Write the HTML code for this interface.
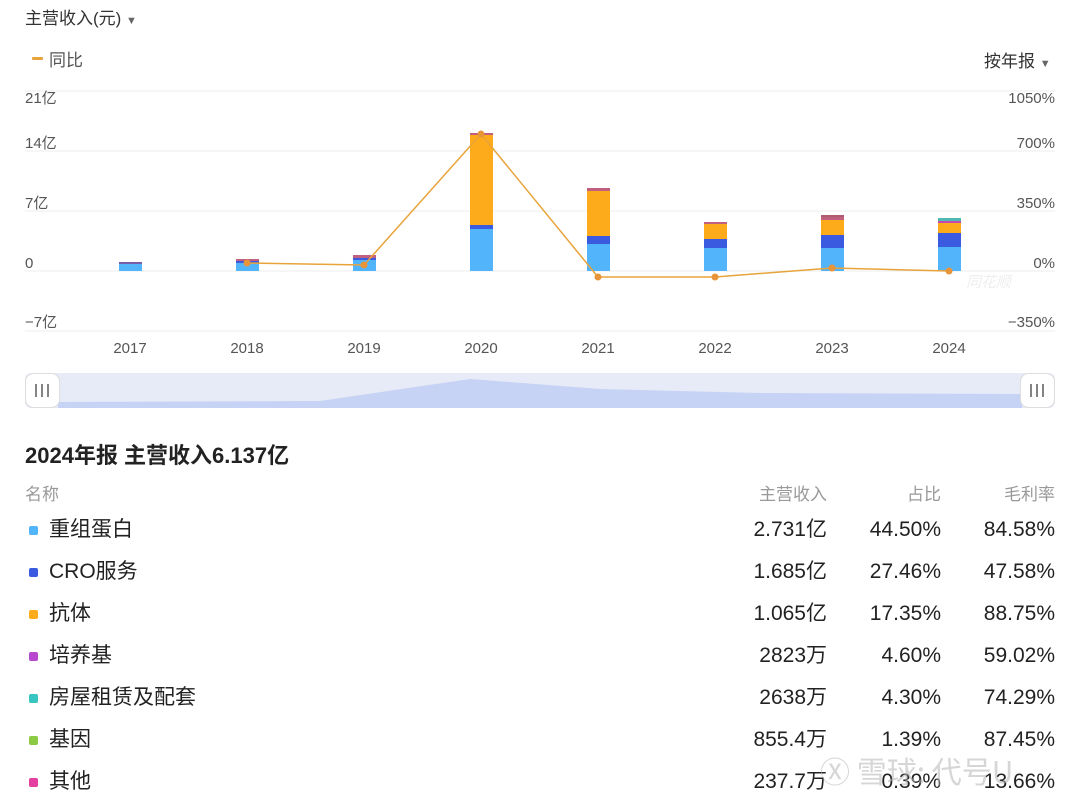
<!DOCTYPE html>
<html><head><meta charset="utf-8">
<style>
html,body{margin:0;padding:0;background:#fff;}
body{width:1080px;height:803px;position:relative;overflow:hidden;font-family:"Liberation Sans","Noto Sans CJK SC",sans-serif;color:#222;}
.a{position:absolute;white-space:nowrap;}
.hdr{font-size:17px;color:#999;top:484px;line-height:22px;}
.row{font-size:21px;color:#222;line-height:24px;height:24px;}
.r{text-align:right;}
.dot{position:absolute;left:29px;width:9px;height:9px;border-radius:2px;}
</style></head><body>
<div class="a" style="left:25px;top:4px;font-size:17px;color:#333;">主营收入(元) <span style="font-size:11px;color:#666;">▼</span></div>
<div class="a" style="left:32px;top:57px;width:11px;height:3px;background:#e8a33a;border-radius:1px;"></div>
<div class="a" style="left:49px;top:46px;font-size:17px;color:#555;">同比</div>
<div class="a" style="left:984px;top:47px;font-size:17px;color:#333;">按年报 <span style="font-size:11px;color:#666;">▼</span></div>

<svg class="a" style="left:0;top:0" width="1080" height="420" xmlns="http://www.w3.org/2000/svg">
<g stroke="#ececec" stroke-width="1">
<line x1="25" y1="91" x2="1055" y2="91"/><line x1="25" y1="151" x2="1055" y2="151"/>
<line x1="25" y1="211" x2="1055" y2="211"/><line x1="25" y1="271" x2="1055" y2="271"/>
<line x1="25" y1="331" x2="1055" y2="331"/>
</g>
<g font-family="Liberation Sans,Noto Sans CJK SC,sans-serif" font-size="15" fill="#555">
<text x="25" y="103">21亿</text><text x="25" y="148">14亿</text><text x="25" y="208">7亿</text><text x="25" y="268">0</text><text x="25" y="327">−7亿</text>
<g text-anchor="end"><text x="1055" y="103">1050%</text><text x="1055" y="148">700%</text><text x="1055" y="208">350%</text><text x="1055" y="268">0%</text><text x="1055" y="327">−350%</text></g>
<g text-anchor="middle" fill="#555"><text x="130" y="353">2017</text><text x="247" y="353">2018</text><text x="364" y="353">2019</text><text x="481" y="353">2020</text><text x="598" y="353">2021</text><text x="715" y="353">2022</text><text x="832" y="353">2023</text><text x="949" y="353">2024</text></g>
</g>
<g>
<rect x="119" y="264" width="23" height="7" fill="#52b4fb"/><rect x="119" y="262" width="23" height="2" fill="#7a5da8"/>
<rect x="236" y="263" width="23" height="8" fill="#52b4fb"/><rect x="236" y="261" width="23" height="2" fill="#3a5be0"/><rect x="236" y="259" width="23" height="2" fill="#c06080"/>
<rect x="353" y="260" width="23" height="11" fill="#52b4fb"/><rect x="353" y="258" width="23" height="2" fill="#3a5be0"/><rect x="353" y="255" width="23" height="3" fill="#c06080"/>
<rect x="470" y="229" width="23" height="42" fill="#52b4fb"/><rect x="470" y="225" width="23" height="4" fill="#3a5be0"/><rect x="470" y="135" width="23" height="90" fill="#fdab1a"/><rect x="470" y="133" width="23" height="2" fill="#c06080"/>
<rect x="587" y="244" width="23" height="27" fill="#52b4fb"/><rect x="587" y="236" width="23" height="8" fill="#3a5be0"/><rect x="587" y="191" width="23" height="45" fill="#fdab1a"/><rect x="587" y="188" width="23" height="3" fill="#c06080"/>
<rect x="704" y="248" width="23" height="23" fill="#52b4fb"/><rect x="704" y="239" width="23" height="9" fill="#3a5be0"/><rect x="704" y="224" width="23" height="15" fill="#fdab1a"/><rect x="704" y="222" width="23" height="2" fill="#c06080"/>
<rect x="821" y="248" width="23" height="23" fill="#52b4fb"/><rect x="821" y="235" width="23" height="13" fill="#3a5be0"/><rect x="821" y="220" width="23" height="15" fill="#fdab1a"/><rect x="821" y="217" width="23" height="3" fill="#c06080"/><rect x="821" y="215" width="23" height="2" fill="#b05a70"/>
<rect x="938" y="247" width="23" height="24" fill="#52b4fb"/><rect x="938" y="233" width="23" height="14" fill="#3a5be0"/><rect x="938" y="223" width="23" height="10" fill="#fdab1a"/><rect x="938" y="221" width="23" height="2" fill="#c04ab0"/><rect x="938" y="218" width="23" height="3" fill="#4fb8b0"/>
</g>
<polyline points="247,263 364,265 481,134 598,277 715,277 832,268 949,271" fill="none" stroke="#e8a33a" stroke-width="1.5"/>
<g fill="#e8953a"><circle cx="247" cy="263" r="3.5"/><circle cx="364" cy="265" r="3.5"/><circle cx="481" cy="134" r="3.5"/><circle cx="598" cy="277" r="3.5"/><circle cx="715" cy="277" r="3.5"/><circle cx="832" cy="268" r="3.5"/><circle cx="949" cy="271" r="3.5"/></g>
<text x="966" y="287" font-size="15" font-style="italic" fill="#eee" font-family="Noto Sans CJK SC,sans-serif">同花顺</text>
<rect x="25" y="373" width="1030" height="35" rx="6" fill="#e6ebf7"/>
<polygon points="58,408 58,402 320,401 470,379 600,389 760,393 1022,394 1022,408" fill="#c7d3f5"/>
<rect x="25.5" y="373.5" width="34" height="34" rx="8" fill="#fff" stroke="#ddd"/>
<rect x="1020.5" y="373.5" width="34" height="34" rx="8" fill="#fff" stroke="#ddd"/>
<g stroke="#777" stroke-width="1.8"><line x1="36" y1="384" x2="36" y2="397"/><line x1="42" y1="384" x2="42" y2="397"/><line x1="48" y1="384" x2="48" y2="397"/>
<line x1="1031" y1="384" x2="1031" y2="397"/><line x1="1037" y1="384" x2="1037" y2="397"/><line x1="1043" y1="384" x2="1043" y2="397"/></g>
</svg>

<div class="a" style="left:25px;top:438px;font-size:22px;font-weight:bold;color:#222;">2024年报 主营收入6.137亿</div>
<div class="a hdr" style="left:25px;">名称</div>
<div class="a hdr r" style="right:253px;">主营收入</div>
<div class="a hdr r" style="right:139px;">占比</div>
<div class="a hdr r" style="right:25px;">毛利率</div>

<div class="dot" style="top:526px;background:#52b4fb"></div>
<div class="dot" style="top:568px;background:#3a5be0"></div>
<div class="dot" style="top:610px;background:#fdab1a"></div>
<div class="dot" style="top:652px;background:#b847d0"></div>
<div class="dot" style="top:694px;background:#36c5c0"></div>
<div class="dot" style="top:736px;background:#8cca44"></div>
<div class="dot" style="top:778px;background:#e340a0"></div>

<div class="a row" style="left:49px;top:518px;">重组蛋白</div>
<div class="a row" style="left:49px;top:560px;">CRO服务</div>
<div class="a row" style="left:49px;top:602px;">抗体</div>
<div class="a row" style="left:49px;top:644px;">培养基</div>
<div class="a row" style="left:49px;top:686px;">房屋租赁及配套</div>
<div class="a row" style="left:49px;top:728px;">基因</div>
<div class="a row" style="left:49px;top:770px;">其他</div>

<div class="a row r" style="right:253px;top:518px;">2.731亿</div>
<div class="a row r" style="right:253px;top:560px;">1.685亿</div>
<div class="a row r" style="right:253px;top:602px;">1.065亿</div>
<div class="a row r" style="right:253px;top:644px;">2823万</div>
<div class="a row r" style="right:253px;top:686px;">2638万</div>
<div class="a row r" style="right:253px;top:728px;">855.4万</div>
<div class="a row r" style="right:253px;top:770px;">237.7万</div>

<div class="a row r" style="right:139px;top:518px;">44.50%</div>
<div class="a row r" style="right:139px;top:560px;">27.46%</div>
<div class="a row r" style="right:139px;top:602px;">17.35%</div>
<div class="a row r" style="right:139px;top:644px;">4.60%</div>
<div class="a row r" style="right:139px;top:686px;">4.30%</div>
<div class="a row r" style="right:139px;top:728px;">1.39%</div>
<div class="a row r" style="right:139px;top:770px;">0.39%</div>

<div class="a row r" style="right:25px;top:518px;">84.58%</div>
<div class="a row r" style="right:25px;top:560px;">47.58%</div>
<div class="a row r" style="right:25px;top:602px;">88.75%</div>
<div class="a row r" style="right:25px;top:644px;">59.02%</div>
<div class="a row r" style="right:25px;top:686px;">74.29%</div>
<div class="a row r" style="right:25px;top:728px;">87.45%</div>
<div class="a row r" style="right:25px;top:770px;">13.66%</div>

<div class="a" style="left:820px;top:748px;font-size:30px;color:rgba(180,180,180,0.55);font-family:'Noto Sans CJK SC',sans-serif;">Ⓧ 雪球: 代号U</div>
</body></html>
